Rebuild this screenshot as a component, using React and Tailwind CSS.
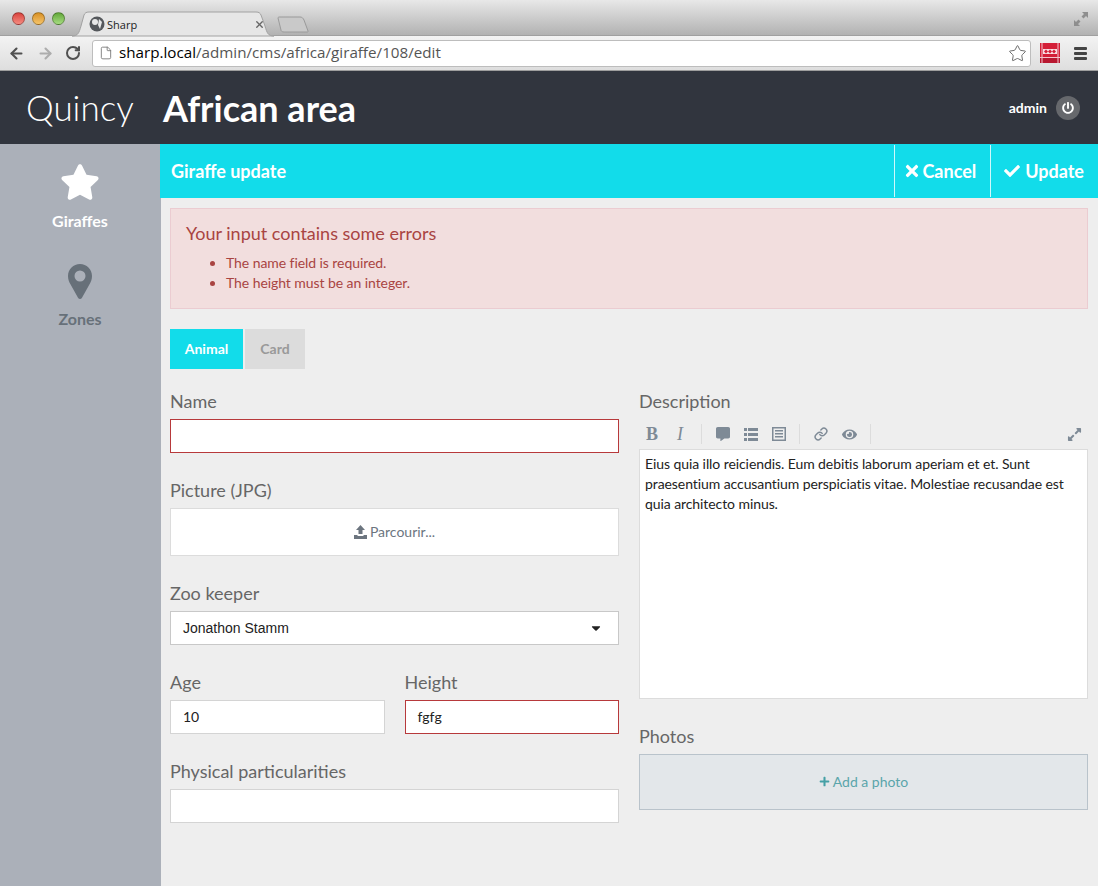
import { ArrowLeft, ArrowRight, RotateCw, File, Star, X, Link } from "lucide-react";
import {
  FaStar,
  FaTimes,
  FaCheck,
  FaPowerOff,
  FaPlus,
  FaCommentAlt,
  FaEye,
  FaExpandAlt,
  FaCaretDown,
} from "react-icons/fa";

const font = "font-['Lato','Noto_Sans',sans-serif]";

function Dot({ color }) {
  return <span className={`h-[13px] w-[13px] rounded-full border border-black/30 bg-gradient-to-b ${color}`}></span>;
}

function ChromeBar() {
  return (
    <div className="font-['Open_Sans',sans-serif]">
      <div className="relative flex h-[36px] items-center border-b border-[#a0a0a0] bg-gradient-to-b from-[#e8e8e8] to-[#b2b2b2] pt-[2px]">
        <div className="ml-[12px] flex gap-[7px]">
          <Dot color="from-[#d8403c] to-[#f58a80]" />
          <Dot color="from-[#d89020] to-[#f5c468]" />
          <Dot color="from-[#62a838] to-[#a6dc80]" />
        </div>
        <svg className="absolute left-[70px] top-[11px]" width="240" height="26" viewBox="0 0 240 26">
          <path d="M2 25 C8 25 9 22 11 15 L14 4 C15 2 16 1 19 1 L186 1 C189 1 190 2 191 4 L195 15 C197 22 198 25 204 25 Z" fill="#e6e6e6" stroke="#a2a2a2" />
          <path d="M208 7 C208 6 209 6 210 6 L230 6 C232 6 233 7 234 9 L238 20 C238 21 238 21 237 21 L214 21 C212 21 211 20 211 19 Z" fill="#c9c9c9" stroke="#9a9a9a" />
        </svg>
        <div className="absolute left-[89px] top-[16px] flex w-[176px] items-center">
          <svg width="16" height="16" viewBox="0 0 16 16">
            <circle cx="8" cy="8" r="7.5" fill="#55585c" />
            <circle cx="6" cy="6" r="3" fill="#e8e8e8" />
            <path d="M10 3 L13 6 L11 13 L9 9 Z" fill="#e8e8e8" />
          </svg>
          <span className="ml-[2px] text-[11px] leading-none text-[#222]">Sharp</span>
          <X className="ml-auto h-[11px] w-[11px] text-[#666]" strokeWidth={3} />
        </div>
        <svg className="ml-auto mr-[9px]" width="16" height="16" viewBox="0 0 16 16" fill="#8e8e8e">
          <path d="M9 1 H15 V7 L13 5 L10.5 7.5 L8.5 5.5 L11 3 Z" />
          <path d="M7 15 H1 V9 L3 11 L5.5 8.5 L7.5 10.5 L5 13 Z" />
        </svg>
      </div>
      <div className="flex h-[35px] items-center border-b border-[#9e9e9e] bg-gradient-to-b from-[#f3f3f3] to-[#dedede]">
        <ArrowLeft className="ml-[8px] h-[17px] w-[17px] text-[#505050]" strokeWidth={3} />
        <ArrowRight className="ml-[12px] h-[17px] w-[17px] text-[#adadad]" strokeWidth={3} />
        <RotateCw className="ml-[11px] h-[16px] w-[16px] text-[#505050]" strokeWidth={3} />
        <div className="ml-[11px] flex h-[27px] w-[939px] items-center rounded-[3px] border border-[#bdbdbd] bg-white pl-[6px] pr-[3px]">
          <File className="h-[16px] w-[14px] text-[#777]" strokeWidth={1.5} />
          <span className="ml-[6px] text-[15.2px] leading-none text-black">sharp.local</span>
          <span className="text-[15.2px] leading-none text-[#555]">/admin/cms/africa/giraffe/108/edit</span>
          <Star className="ml-auto h-[19px] w-[19px] text-[#666]" strokeWidth={1.2} />
        </div>
        <svg className="ml-[9px]" width="20" height="20" viewBox="0 0 20 20">
          <rect width="20" height="20" fill="#d41f38" />
          <rect y="14" width="20" height="6" fill="#b81830" />
          <rect x="1.5" width="1" height="20" fill="#f6c6ce" />
          <rect x="17.5" width="1" height="20" fill="#f6c6ce" />
          <path d="M3 6 H17 V11 H3 Z" fill="#f8dfe3" />
          <path d="M4 8.5 L6 6.5 L8 8.5 L10 6.5 L12 8.5 L14 6.5 L16 8.5 L14 10.5 L12 8.5 L10 10.5 L8 8.5 L6 10.5 Z" fill="#d41f38" />
          <rect y="14" width="20" height="1" fill="#f6c6ce" />
        </svg>
        <div className="ml-[14px] flex w-[13px] flex-col gap-[2px]">
          <span className="h-[3px] rounded-[1px] bg-[#444]"></span>
          <span className="h-[3px] rounded-[1px] bg-[#444]"></span>
          <span className="h-[3px] rounded-[1px] bg-[#444]"></span>
        </div>
      </div>
    </div>
  );
}

function Field({ label, children, className = "" }) {
  return (
    <div className={className}>
      <label className="mb-[8px] block h-[20px] text-[18px] leading-[20px] text-[#666]">{label}</label>
      {children}
    </div>
  );
}

function TextInput({ value = "", error }) {
  return (
    <div
      className={`flex h-[34px] items-center border bg-white px-[12px] pb-[1px] text-[14px] text-[#222] ${
        error ? "border-[#b7393b]" : "border-[#d4d4d4]"
      }`}
    >
      {value}
    </div>
  );
}

function ToolIcon({ children }) {
  return <span className="flex w-[28px] justify-center text-[#7e8a96]">{children}</span>;
}

function Sep({ className = "" }) {
  return <span className={`h-[20px] w-px bg-[#dcdcdc] ${className}`}></span>;
}

function Editor() {
  return (
    <>
      <div className="-mt-[2px] flex h-[32px] items-center pt-[2px]">
        <div className="-ml-px flex font-['Liberation_Serif',serif] text-[18px] leading-none">
          <ToolIcon><span className="font-bold">B</span></ToolIcon>
          <ToolIcon><span className="italic">I</span></ToolIcon>
        </div>
        <Sep className="mx-[7px]" />
        <ToolIcon><FaCommentAlt size={14} /></ToolIcon>
        <ToolIcon>
          <svg width="14" height="13" viewBox="0 0 14 13" fill="currentColor">
            <rect y="0" width="3" height="3" />
            <rect x="4" y="0" width="10" height="3" />
            <rect y="5" width="3" height="3" />
            <rect x="4" y="5" width="10" height="3" />
            <rect y="10" width="3" height="3" />
            <rect x="4" y="10" width="10" height="3" />
          </svg>
        </ToolIcon>
        <ToolIcon>
          <svg width="14" height="14" viewBox="0 0 14 14" fill="currentColor">
            <path fillRule="evenodd" d="M0 0 H14 V14 H0 Z M1.5 1.5 V12.5 H12.5 V1.5 Z" />
            <rect x="3" y="3" width="8" height="1.5" />
            <rect x="3" y="6" width="8" height="1.5" />
            <rect x="3" y="9" width="8" height="1.5" />
          </svg>
        </ToolIcon>
        <Sep className="ml-[6px] mr-[7px]" />
        <ToolIcon><Link size={14} strokeWidth={2.5} /></ToolIcon>
        <ToolIcon><FaEye size={15} /></ToolIcon>
        <Sep className="ml-[7px]" />
        <span className="ml-auto mr-[6px] text-[#7e8a96]"><FaExpandAlt size={15} /></span>
      </div>
      <div className="h-[250px] border border-[#dcdcdc] bg-white px-[5px] pb-[6px] pt-[4px] text-[14px] leading-[20px] tracking-[-0.08px] text-[#222]">
        Eius quia illo reiciendis. Eum debitis laborum aperiam et et. Sunt praesentium accusantium perspiciatis vitae. Molestiae recusandae est quia architecto minus.
      </div>
    </>
  );
}

export default function App() {
  return (
    <div className={`flex h-[886px] w-[1098px] flex-col overflow-hidden bg-[#eee] ${font}`}>
      <ChromeBar />

      <header className="flex h-[73px] items-center bg-[#31353e] pl-[26px] pr-[18px] text-white">
        <span className="w-[137px] text-[35px] font-light leading-none">Quincy</span>
        <h1 className="text-[36px] font-bold leading-none">African area</h1>
        <span className="ml-auto text-[14px] font-bold">admin</span>
        <span className="ml-[9px] flex h-[24px] w-[24px] items-center justify-center rounded-full bg-[#66686c]">
          <FaPowerOff size={12} />
        </span>
      </header>

      <div className="flex flex-1">
        <aside className="flex w-[161px] shrink-0 flex-col items-center bg-[#abb0b9] pr-px pt-[18px] text-[16px] font-bold">
          <FaStar size={40} className="text-white" />
          <span className="mt-[9px] leading-[20px] text-white">Giraffes</span>
          <svg className="mt-[33px] text-[#677079]" width="24" height="35" viewBox="0 0 24 35" fill="currentColor">
            <path
              fillRule="evenodd"
              d="M12 0 C5.4 0 0 5.4 0 12 C0 15.5 1.2 18 2.6 20.6 L10 33.8 C11 35.4 13 35.4 14 33.8 L21.4 20.6 C22.8 18 24 15.5 24 12 C24 5.4 18.6 0 12 0 Z M12 6.5 A5.5 5.5 0 1 1 12 17.5 A5.5 5.5 0 1 1 12 6.5 Z"
            />
          </svg>
          <span className="mt-[10px] leading-[20px] text-[#677079]">Zones</span>
        </aside>

        <main className="-ml-px min-w-0 flex-1">
          <div className="flex h-[54px] items-stretch bg-[#12dcea] text-[18px] font-bold text-white">
            <h2 className="flex flex-1 items-center pl-[11px]">Giraffe update</h2>
            <button className="my-px flex items-center gap-[1px] border-l border-white/80 pl-[8px] pr-[14px]">
              <FaTimes size={18} /> Cancel
            </button>
            <button className="my-px flex items-center gap-[5px] border-l border-white/80 pl-[13px] pr-[14px]">
              <FaCheck size={16} /> Update
            </button>
          </div>

          <div className="px-[10px] pt-[10px]">
            <div className="h-[101px] border border-[#ebccd1] bg-[#f2dede] px-[15px] pt-[14px] text-[#a94442]">
              <h3 className="text-[18px] leading-[20px]">Your input contains some errors</h3>
              <ul className="ml-[40px] mt-[10px] list-disc text-[14px] leading-[20px] tracking-[-0.07px]">
                <li>The name field is required.</li>
                <li>The height must be an integer.</li>
              </ul>
            </div>

            <div className="mt-[20px] flex gap-[2px] text-[14px] font-bold">
              <span className="flex h-[40px] w-[73px] items-center justify-center bg-[#12dcea] pb-px text-white">Animal</span>
              <span className="flex h-[40px] w-[60px] items-center justify-center bg-[#dcdcdc] pb-px text-[#999]">Card</span>
            </div>

            <div className="mt-[22px] grid grid-cols-2 gap-x-[20px]">
              <div className="flex flex-col gap-[27px]">
                <Field label="Name"><TextInput error /></Field>
                <Field label="Picture (JPG)">
                  <div className="flex h-[48px] items-center justify-center gap-[3px] border border-[#dcdcdc] bg-white pb-px text-[14px] text-[#6c757f]">
                    <svg width="13" height="14" viewBox="0 0 13 14" fill="currentColor">
                      <path d="M6.5 0 L11 5 H8.5 V9 H4.5 V5 H2 Z" />
                      <path d="M0 10 H3.5 V11 H9.5 V10 H13 V14 H0 Z" />
                    </svg>
                    Parcourir...
                  </div>
                </Field>
                <Field label="Zoo keeper">
                  <div className="flex h-[34px] items-center justify-between border border-[#c8c8c8] bg-white pl-[12px] pr-[15px] font-['Liberation_Sans',sans-serif] text-[14px] text-[#222]">
                    Jonathon Stamm
                    <FaCaretDown size={14} />
                  </div>
                </Field>
                <div className="grid grid-cols-2 gap-x-[20px]">
                  <Field label="Age"><TextInput value="10" /></Field>
                  <Field label="Height"><TextInput value="fgfg" error /></Field>
                </div>
                <Field label="Physical particularities"><TextInput /></Field>
              </div>

              <div className="flex flex-col gap-[27px]">
                <Field label="Description"><Editor /></Field>
                <Field label="Photos">
                  <div className="flex h-[56px] items-center justify-center gap-[3px] border border-[#b9c3cb] bg-[#e3e7ea] pb-px text-[14px] text-[#5aa5ab]">
                    <FaPlus size={11} className="text-[#45a0a6]" /> Add a photo
                  </div>
                </Field>
              </div>
            </div>
          </div>
        </main>
      </div>
    </div>
  );
}
